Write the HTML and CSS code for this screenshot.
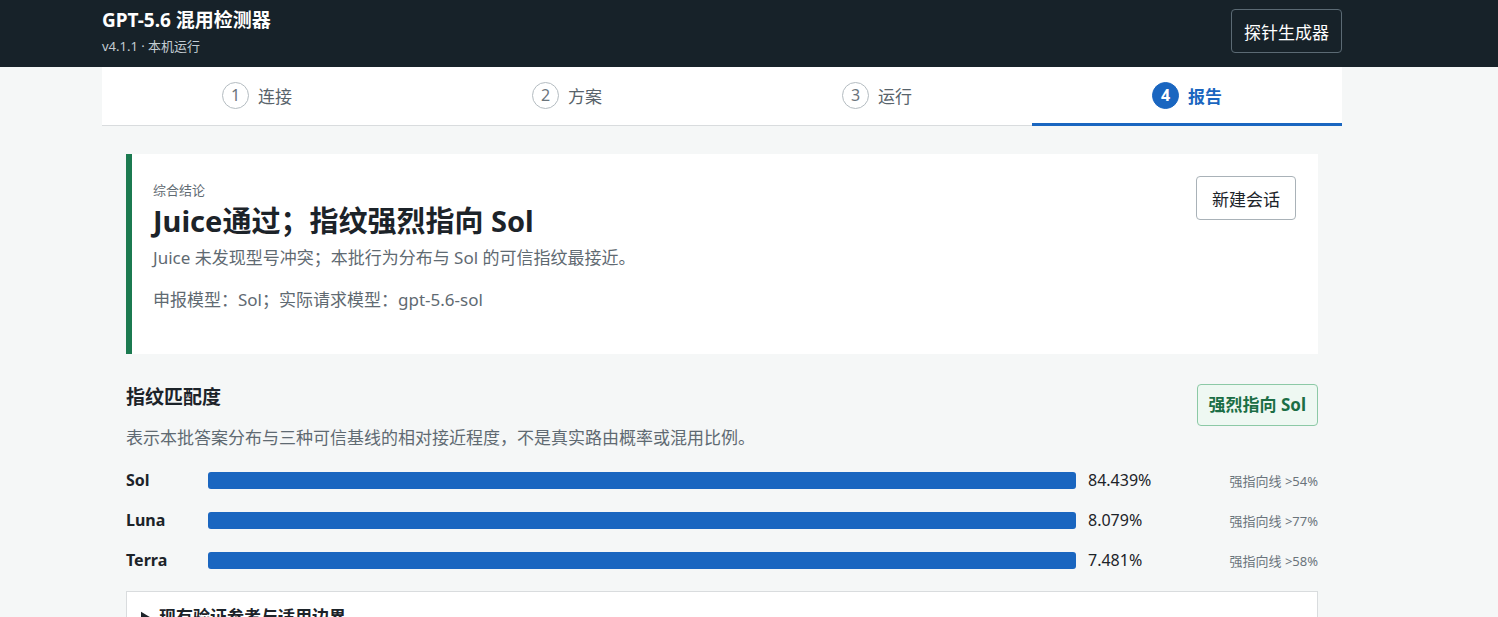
FILE: index.html
```html
<html>
  <head>
    <title>GPT-5.6 混用检测器</title>
    <link rel="stylesheet" href="styles.css">
  </head>
  <body>
    <header class="topbar">
      <div class="wrap topbar-inner">
        <div class="brand">
          <h1>GPT-5.6 混用检测器</h1>
          <div class="version">v4.1.1 · 本机运行</div>
        </div>
        <button class="btn-dark">探针生成器</button>
      </div>
    </header>

    <div class="wrap">
      <nav class="steps">
        <div class="step"><span class="num">1</span>连接</div>
        <div class="step"><span class="num">2</span>方案</div>
        <div class="step"><span class="num">3</span>运行</div>
        <div class="step active"><span class="num">4</span>报告</div>
      </nav>

      <main class="report">
        <section class="verdict">
          <div class="verdict-text">
            <div class="eyebrow">综合结论</div>
            <h2>Juice通过；指纹强烈指向 Sol</h2>
            <p class="muted">Juice 未发现型号冲突；本批行为分布与 Sol 的可信指纹最接近。</p>
            <p class="muted meta">申报模型：Sol；实际请求模型：gpt-5.6-sol</p>
          </div>
          <button class="btn-light">新建会话</button>
        </section>

        <section class="match">
          <div class="match-head">
            <div>
              <h3>指纹匹配度</h3>
              <p class="muted">表示本批答案分布与三种可信基线的相对接近程度，不是真实路由概率或混用比例。</p>
            </div>
            <span class="badge">强烈指向 Sol</span>
          </div>

          <div class="bars">
            <div class="bar-row">
              <span class="bar-name">Sol</span>
              <div class="bar-track"><div class="bar-fill"></div></div>
              <span class="bar-value">84.439%</span>
              <span class="bar-line">强指向线 &gt;54%</span>
            </div>
            <div class="bar-row">
              <span class="bar-name">Luna</span>
              <div class="bar-track"><div class="bar-fill"></div></div>
              <span class="bar-value">8.079%</span>
              <span class="bar-line">强指向线 &gt;77%</span>
            </div>
            <div class="bar-row">
              <span class="bar-name">Terra</span>
              <div class="bar-track"><div class="bar-fill"></div></div>
              <span class="bar-value">7.481%</span>
              <span class="bar-line">强指向线 &gt;58%</span>
            </div>
          </div>

          <details class="notes">
            <summary>现有验证参考与适用边界</summary>
            <p class="muted">仅供参考。</p>
          </details>
        </section>
      </main>
    </div>
  </body>
</html>
```

FILE: styles.css
```css
body {
  margin: 0;
  font-family: "Noto Sans", "Noto Sans CJK SC", sans-serif;
  color: #1c2329;
  background: #f5f7f7;
}

.wrap {
  width: 1240px;
  margin-left: 102px;
}

/* top bar */
.topbar {
  background: #172229;
  color: #ffffff;
  height: 67px;
}

.topbar-inner {
  display: flex;
  justify-content: space-between;
  align-items: flex-start;
  padding-top: 8px;
}

.brand h1 {
  margin: 0;
  font-size: 19px;
  font-weight: 700;
  line-height: 24px;
}

.version {
  margin-top: 5px;
  font-size: 13px;
  line-height: 18px;
  color: #c3ccd2;
}

.btn-dark {
  font-family: inherit;
  font-size: 17px;
  color: #ffffff;
  background: transparent;
  border: 1px solid #5b6a74;
  border-radius: 4px;
  height: 44px;
  padding: 0 12px;
  margin-top: 1px;
}

/* step tabs */
.steps {
  display: flex;
  background: #ffffff;
  border-bottom: 1px solid #d9dcde;
}

.step {
  flex: 1;
  height: 56px;
  display: flex;
  justify-content: center;
  align-items: center;
  gap: 9px;
  font-size: 17px;
  color: #58636b;
  border-bottom: 3px solid transparent;
  margin-bottom: -1px;
}

.num {
  width: 25px;
  height: 25px;
  border: 1px solid #b4bcc1;
  border-radius: 50%;
  display: flex;
  justify-content: center;
  align-items: center;
  font-size: 16px;
  color: #6a747b;
}

.step.active {
  color: #1a66c0;
  font-weight: 700;
  border-bottom-color: #1a66c0;
}

.step.active .num {
  background: #1a66c0;
  border-color: #1a66c0;
  color: #ffffff;
  font-weight: 700;
}

/* report body */
.report {
  padding: 28px 24px 0;
}

.muted {
  color: #5f6a72;
  font-size: 17px;
  line-height: 26px;
  margin: 0;
}

.verdict {
  display: flex;
  justify-content: space-between;
  align-items: flex-start;
  background: #ffffff;
  border-left: 6px solid #1b7a50;
  padding: 22px 22px 41px 21px;
}

.verdict-text {
  padding-top: 5px;
}

.eyebrow {
  font-size: 13px;
  line-height: 18px;
  color: #5f6a72;
}

.verdict h2 {
  margin: 4px 0 6px;
  font-size: 29px;
  font-weight: 700;
  line-height: 36px;
}

.meta {
  margin-top: 16px;
}

.btn-light {
  font-family: inherit;
  font-size: 17px;
  color: #1c2329;
  background: #ffffff;
  border: 1px solid #a9b2b8;
  border-radius: 4px;
  height: 44px;
  padding: 0 15px;
}

/* fingerprint match */
.match {
  padding-top: 30px;
}

.match-head {
  display: flex;
  justify-content: space-between;
  align-items: flex-start;
}

.match h3 {
  margin: 0 0 15px;
  font-size: 19px;
  font-weight: 700;
  line-height: 26px;
}

.badge {
  font-size: 17px;
  font-weight: 700;
  color: #1b6e45;
  background: #eef8f2;
  border: 1px solid #8cc9a6;
  border-radius: 4px;
  padding: 8px 11px;
  line-height: 24px;
}

.bars {
  margin-top: 18px;
  display: flex;
  flex-direction: column;
  gap: 18px;
}

.bar-row {
  display: flex;
  align-items: center;
  height: 22px;
}

.bar-name {
  width: 82px;
  font-size: 16px;
  font-weight: 700;
}

.bar-track {
  width: 868px;
  height: 17px;
  border-radius: 3px;
  background: #dfe4e8;
  overflow: hidden;
}

.bar-fill {
  width: 100%;
  height: 100%;
  background: #1a66c0;
}

.bar-value {
  margin-left: 12px;
  font-size: 16px;
  flex: 1;
}

.bar-line {
  font-size: 13px;
  color: #6a747b;
}

.notes {
  margin-top: 20px;
  background: #ffffff;
  border: 1px solid #d9dcde;
  padding: 12px 14px;
}

.notes summary {
  font-size: 17px;
  font-weight: 700;
  line-height: 26px;
}

.notes p {
  margin-top: 10px;
}
```
